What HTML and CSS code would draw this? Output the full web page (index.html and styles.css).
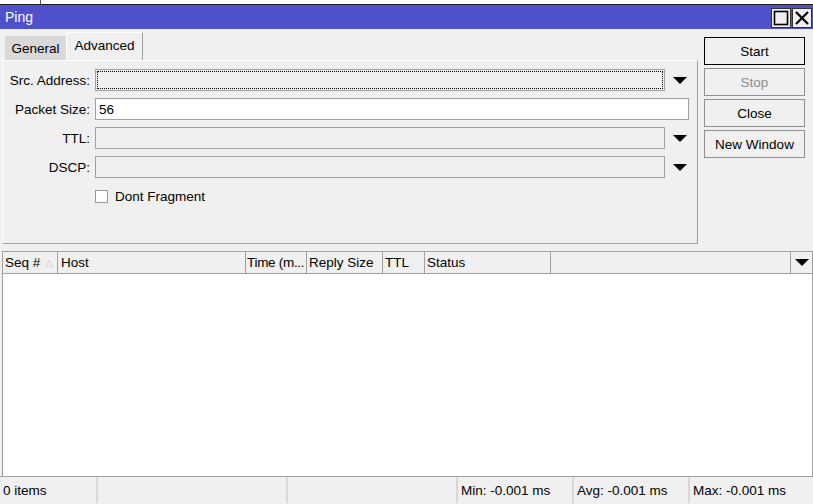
FILE: index.html
```html
<!DOCTYPE html>
<html>
<head>
<meta charset="utf-8">
<link rel="stylesheet" href="styles.css">
</head>
<body>
<div class="topstrip"><div class="topline"></div></div>
<div class="window">
  <div class="titlebar">
    <span class="title">Ping</span>
    <div class="wbtns">
      <div class="wbtn"><svg width="18" height="18" viewBox="0 0 18 18"><rect x="2.5" y="2.5" width="13" height="13" fill="none" stroke="#000" stroke-width="1.6"/></svg></div>
      <div class="wbtn"><svg width="18" height="18" viewBox="0 0 18 18"><path d="M3 3 L15 15 M15 3 L3 15" stroke="#000" stroke-width="2.2"/></svg></div>
    </div>
  </div>
  <div class="content">
    <div class="left">
      <div class="tabs">
        <div class="tab general">General</div>
        <div class="tab advanced">Advanced</div>
      </div>
      <div class="panel">
        <div class="row">
          <label class="lbl">Src. Address:</label>
          <div class="field grey short focus"><div class="dots"></div></div>
          <span class="arrow"></span>
        </div>
        <div class="row">
          <label class="lbl">Packet Size:</label>
          <div class="field white long">56</div>
        </div>
        <div class="row">
          <label class="lbl">TTL:</label>
          <div class="field grey short"></div>
          <span class="arrow"></span>
        </div>
        <div class="row">
          <label class="lbl">DSCP:</label>
          <div class="field grey short"></div>
          <span class="arrow"></span>
        </div>
        <div class="checkrow">
          <span class="checkbox"></span>
          <span class="checklbl">Dont Fragment</span>
        </div>
      </div>
    </div>
    <div class="buttons">
      <div class="btn default">Start</div>
      <div class="btn disabled">Stop</div>
      <div class="btn">Close</div>
      <div class="btn">New Window</div>
    </div>
  </div>
  <div class="table">
    <div class="thead">
      <div class="th c-seq">Seq #<span class="sort">&#9651;</span></div>
      <div class="th c-host">Host</div>
      <div class="th c-time">Time (m...</div>
      <div class="th c-reply">Reply Size</div>
      <div class="th c-ttl">TTL</div>
      <div class="th c-status">Status</div>
      <div class="th c-fill"></div>
      <div class="th c-menu"><span class="arrow"></span></div>
    </div>
    <div class="tbody"></div>
  </div>
  <div class="statusbar">
    <div class="sc s1">0 items</div>
    <div class="sc s2"></div>
    <div class="sc s3"></div>
    <div class="sc s4">Min: -0.001 ms</div>
    <div class="sc s5">Avg: -0.001 ms</div>
    <div class="sc s6">Max: -0.001 ms</div>
  </div>
</div>
</body>
</html>
```
FILE: styles.css
```css
html, body {
  margin: 0;
  padding: 0;
  background: #f0f0f0;
  font-family: "Liberation Sans", Arial, sans-serif;
  font-size: 13.5px;
  color: #000;
  overflow: hidden;
  width: 813px;
  height: 504px;
}
.topstrip {
  height: 4px;
  background: #fff;
  display: flex;
}
.topline {
  margin-left: 40px;
  width: 1px;
  background: #555;
}
.window {
  border-top: 1px solid #222;
}
.titlebar {
  height: 24px;
  background: #4f50cc;
  display: flex;
  align-items: center;
  justify-content: space-between;
}
.title {
  color: #fff;
  padding-left: 5px;
  font-size: 14px;
}
.wbtns {
  display: flex;
  gap: 1px;
  padding-right: 1px;
  padding-top: 1px;
}
.wbtn {
  width: 18px;
  height: 18px;
  background: #efefef;
  border: 1px solid #333;
}
.wbtn svg { display: block; }
.content {
  display: flex;
  padding-left: 2px;
  height: 222px;
}
.left {
  width: 696px;
  padding-top: 3px;
}
.tabs {
  display: flex;
  align-items: flex-end;
  height: 28px;
  padding-left: 3px;
}
.tab {
  box-sizing: border-box;
  display: flex;
  align-items: center;
  justify-content: center;
}
.tab.general {
  width: 61px;
  height: 24px;
  background: #d9d9d9;
  padding-top: 1px;
}
.tab.advanced {
  width: 77px;
  height: 28px;
  background: #f0f0f0;
  border-left: 1px solid #fff;
  border-top: 1px solid #fff;
  border-right: 1px solid #a0a0a0;
  padding-bottom: 2px;
}
.panel {
  box-sizing: border-box;
  height: 184px;
  border-style: solid;
  border-width: 1px;
  border-color: #fff #a0a0a0 #a0a0a0 #fff;
  padding-top: 8px;
  display: flex;
  flex-direction: column;
  gap: 7px;
}
.row {
  display: flex;
  align-items: center;
  height: 22px;
}
.lbl {
  text-align: right;
  padding-right: 5px;
  box-sizing: border-box;
  width: 92px;
  white-space: nowrap;
}
.field {
  box-sizing: border-box;
  height: 22px;
  border: 1px solid #a0a0a0;
  display: flex;
  align-items: center;
  padding-left: 3px;
}
.field.short { width: 570px; }
.field.long { width: 594px; background: #fff; }
.field.grey { background: #f0f0f0; }
.field.focus { padding: 1px; }
.dots {
  flex: 1;
  height: 100%;
  box-sizing: border-box;
  border: 1px dotted #000;
}
.arrow {
  display: inline-block;
  width: 0;
  height: 0;
  border-left: 7px solid transparent;
  border-right: 7px solid transparent;
  border-top: 7px solid #000;
  margin-left: 8px;
}
.checkrow {
  display: flex;
  align-items: center;
  padding-left: 92px;
  margin-top: 4px;
}
.checkbox {
  width: 13px;
  height: 13px;
  box-sizing: border-box;
  border: 1px solid #999;
  background: #fff;
}
.checklbl {
  margin-left: 7px;
}
.buttons {
  display: flex;
  flex-direction: column;
  gap: 3px;
  padding-top: 8px;
  margin-left: 6px;
}
.btn {
  box-sizing: border-box;
  width: 101px;
  height: 28px;
  border: 1px solid #909090;
  display: flex;
  align-items: center;
  justify-content: center;
  background: #f0f0f0;
}
.btn.default { border: 1px solid #000; }
.btn.disabled { color: #8d8d8d; }
.table {
  margin: 0 0 0 2px;
  border-left: 1px solid #a0a0a0;
  border-right: 1px solid #a0a0a0;
}
.thead {
  display: flex;
  height: 21px;
  border-top: 1px solid #a0a0a0;
  border-bottom: 1px solid #a0a0a0;
  background: #f0f0f0;
}
.th {
  box-sizing: border-box;
  border-right: 1px solid #a0a0a0;
  display: flex;
  align-items: center;
  padding-left: 2px;
  white-space: nowrap;
  overflow: hidden;
}
.c-seq { width: 55px; }
.c-host { width: 188px; padding-left: 3px; }
.c-time { width: 61px; padding-left: 1px; letter-spacing: -0.3px; }
.c-reply { width: 76px; }
.c-ttl { width: 42px; }
.c-status { width: 126px; }
.c-fill { width: 240px; }
.c-menu { flex: 1; border-right: none; padding-left: 0; }
.c-menu .arrow { margin-left: 4px; }
.sort {
  color: #c8c8c8;
  font-size: 10px;
  margin-left: 5px;
}
.tbody {
  height: 202px;
  background: #fff;
}
.statusbar {
  display: flex;
  height: 26px;
  border-top: 1px solid #a0a0a0;
  background: #f0f0f0;
}
.sc {
  box-sizing: border-box;
  display: flex;
  align-items: center;
  padding-left: 3px;
  border-right: 2px solid #d8d8d8;
  white-space: nowrap;
}
.s1 { width: 98px; }
.s2 { width: 190px; }
.s3 { width: 170px; }
.s4 { width: 116px; }
.s5 { width: 116px; }
.s6 { flex: 1; border-right: none; }
```
